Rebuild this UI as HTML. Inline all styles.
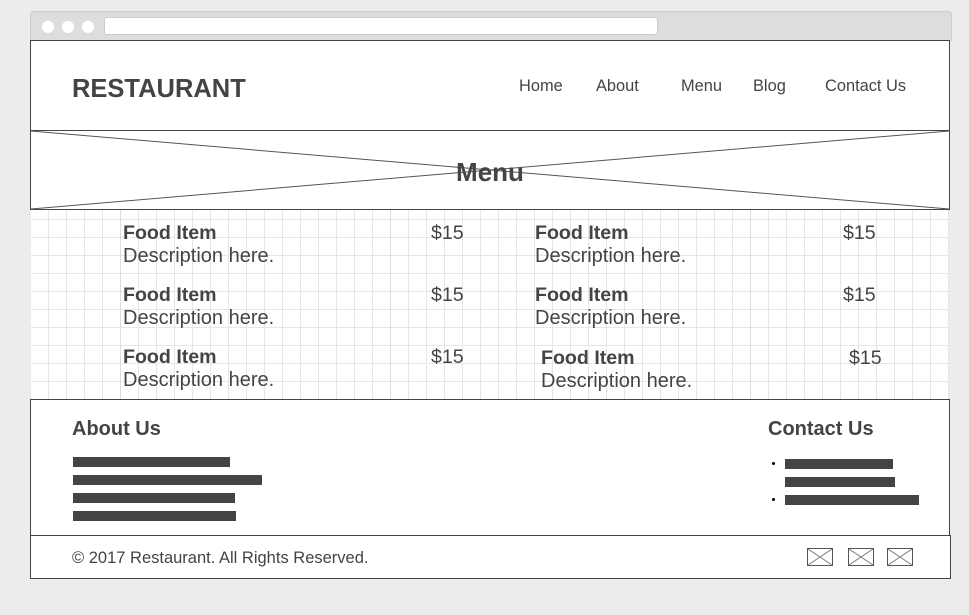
<!DOCTYPE html>
<html><head><meta charset="utf-8"><style>
*{margin:0;padding:0;box-sizing:border-box}
body{width:969px;height:615px;background:#ececec;font-family:"Liberation Sans",sans-serif;color:#444;position:relative;overflow:hidden}
.a{position:absolute}
.bar{left:30px;top:11px;width:922px;height:30px;background:#ddd;border:1px solid #ccc;border-bottom:none;border-radius:4px 4px 0 0}
.dot{width:12px;height:12px;border-radius:50%;background:#fff;top:9px}
.url{left:73px;top:5px;width:554px;height:18px;background:#fff;border:1px solid #ccc;border-radius:3px}
.box{background:#fff;border:1px solid #444}
.nav{top:77px;font-size:16.4px;color:#444}
.grid{left:31px;top:210px;width:918px;height:189px;background-color:#fff;background-image:linear-gradient(#e6e6e6 1px,transparent 1px),linear-gradient(90deg,#e6e6e6 1px,transparent 1px);background-size:18px 18px;background-position:17px 9px}
.fi{font-size:19.6px;font-weight:bold}
.de{font-size:20px;line-height:23px}
.pr{font-size:19.6px}
.ln{height:10px;background:#444}
</style></head><body>
<div class="a bar">
<div class="a dot" style="left:11px"></div><div class="a dot" style="left:31px"></div><div class="a dot" style="left:51px"></div>
<div class="a url"></div></div>
<div class="a box" style="left:30px;top:40px;width:920px;height:91px"></div>
<div class="a" style="left:72px;top:75px;font-size:25.5px;font-weight:bold">RESTAURANT</div>
<div class="a nav" style="left:519px">Home</div>
<div class="a nav" style="left:596px">About</div>
<div class="a nav" style="left:681px">Menu</div>
<div class="a nav" style="left:753px">Blog</div>
<div class="a nav" style="left:825px">Contact Us</div>
<div class="a box" style="left:30px;top:130px;width:920px;height:80px"></div>
<svg class="a" style="left:30px;top:130px" width="920" height="80"><line x1="1" y1="1" x2="919" y2="79" stroke="#555" stroke-width="1"/><line x1="1" y1="79" x2="919" y2="1" stroke="#555" stroke-width="1"/></svg>
<div class="a" style="left:30px;width:920px;top:157px;text-align:center;font-size:26px;font-weight:bold">Menu</div>
<div class="a grid"></div>
<div class="a" style="left:120px;top:210px;width:1px;height:189px;background:#ddd"></div>
<div class="a" style="left:390px;top:210px;width:1px;height:189px;background:#ddd"></div>
<div class="a" style="left:750px;top:210px;width:1px;height:189px;background:#ddd"></div>
<div class="a fi" style="left:123px;top:222px">Food Item</div><div class="a de" style="left:123px;top:245px">Description here.</div><div class="a pr" style="left:431px;top:222px">$15</div>
<div class="a fi" style="left:123px;top:284px">Food Item</div><div class="a de" style="left:123px;top:307px">Description here.</div><div class="a pr" style="left:431px;top:284px">$15</div>
<div class="a fi" style="left:123px;top:346px">Food Item</div><div class="a de" style="left:123px;top:369px">Description here.</div><div class="a pr" style="left:431px;top:346px">$15</div>
<div class="a fi" style="left:535px;top:222px">Food Item</div><div class="a de" style="left:535px;top:245px">Description here.</div><div class="a pr" style="left:843px;top:222px">$15</div>
<div class="a fi" style="left:535px;top:284px">Food Item</div><div class="a de" style="left:535px;top:307px">Description here.</div><div class="a pr" style="left:843px;top:284px">$15</div>
<div class="a fi" style="left:541px;top:347px">Food Item</div><div class="a de" style="left:541px;top:370px">Description here.</div><div class="a pr" style="left:849px;top:347px">$15</div>
<div class="a box" style="left:30px;top:399px;width:920px;height:137px"></div>
<div class="a" style="left:72px;top:418px;font-size:20px;font-weight:bold">About Us</div>
<div class="a ln" style="left:73px;top:457px;width:157px"></div>
<div class="a ln" style="left:73px;top:475px;width:189px"></div>
<div class="a ln" style="left:73px;top:493px;width:162px"></div>
<div class="a ln" style="left:73px;top:511px;width:163px"></div>
<div class="a" style="left:768px;top:418px;font-size:20px;font-weight:bold">Contact Us</div>
<div class="a" style="left:772px;top:462px;width:3px;height:3px;background:#000;border-radius:50%"></div>
<div class="a" style="left:772px;top:498px;width:3px;height:3px;background:#000;border-radius:50%"></div>
<div class="a ln" style="left:785px;top:459px;width:108px"></div>
<div class="a ln" style="left:785px;top:477px;width:110px"></div>
<div class="a ln" style="left:785px;top:495px;width:134px"></div>
<div class="a box" style="left:30px;top:535px;width:921px;height:44px"></div>
<div class="a" style="left:72px;top:549px;font-size:16.5px">© 2017 Restaurant. All Rights Reserved.</div>
<svg class="a" style="left:807px;top:548px" width="26" height="18"><rect x=".5" y=".5" width="25" height="17" fill="#fff" stroke="#555"/><path d="M1 1L25 17M25 1L1 17" stroke="#777"/></svg>
<svg class="a" style="left:848px;top:548px" width="26" height="18"><rect x=".5" y=".5" width="25" height="17" fill="#fff" stroke="#555"/><path d="M1 1L25 17M25 1L1 17" stroke="#777"/></svg>
<svg class="a" style="left:887px;top:548px" width="26" height="18"><rect x=".5" y=".5" width="25" height="17" fill="#fff" stroke="#555"/><path d="M1 1L25 17M25 1L1 17" stroke="#777"/></svg>
</body></html>
